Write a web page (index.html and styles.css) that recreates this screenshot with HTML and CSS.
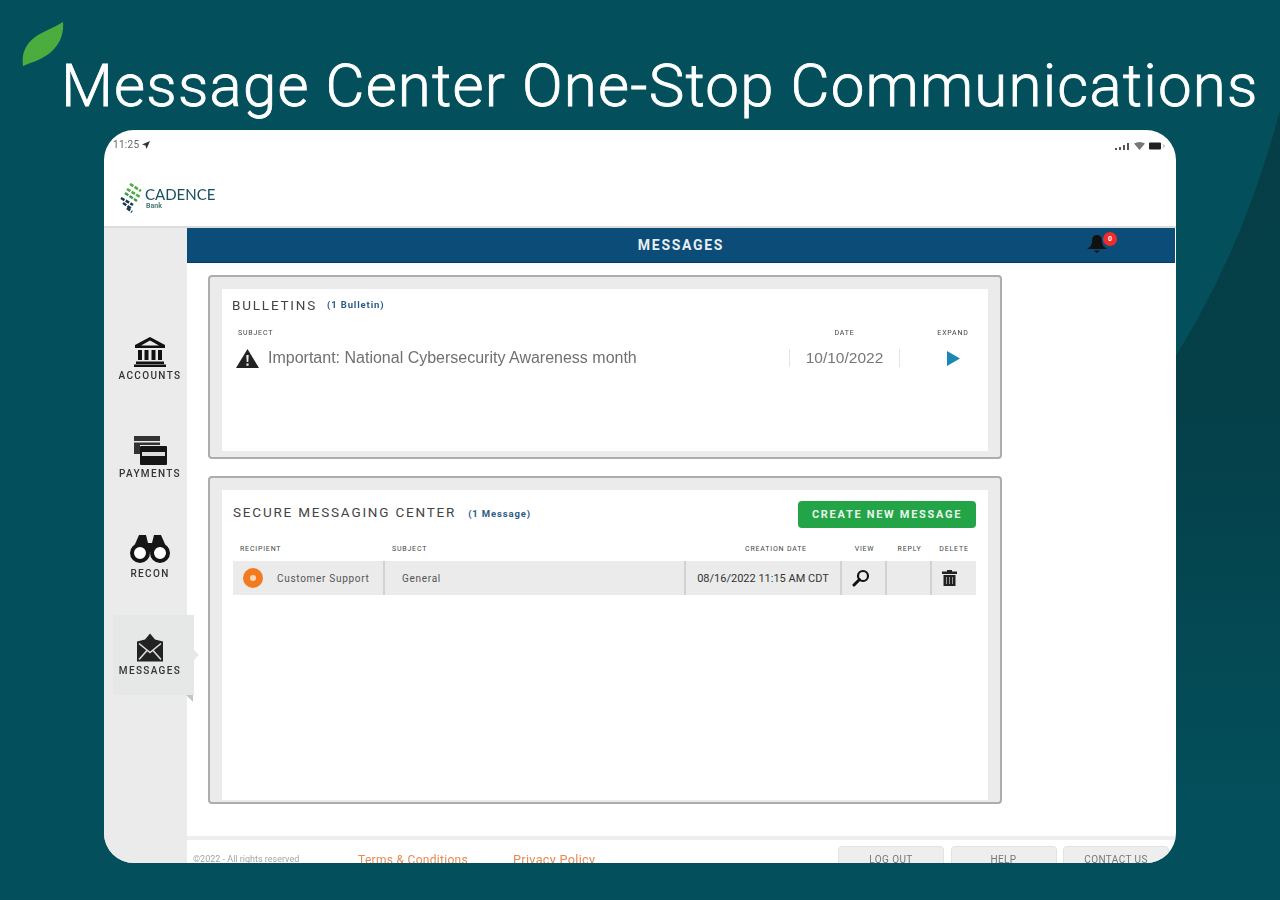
FILE: index.html
```html
<!DOCTYPE html>
<html lang="en">
<head>
<meta charset="utf-8">
<title>Message Center One-Stop Communications</title>
<link rel="stylesheet" href="styles.css">
</head>
<body>
<div class="stage">
  <svg class="swoosh" width="1280" height="900" viewBox="0 0 1280 900" aria-hidden="true">
    <defs>
      <linearGradient id="sw" gradientUnits="userSpaceOnUse" x1="0" y1="110" x2="0" y2="820">
        <stop offset="0" stop-color="#053e47"/>
        <stop offset="0.4" stop-color="#053f48"/>
        <stop offset="1" stop-color="#03505c"/>
      </linearGradient>
    </defs>
    <path d="M1280 110Q1240 262 1160 380L1160 900L1280 900Z" fill="url(#sw)"/>
  </svg>
  <svg class="leaf" width="42" height="46" viewBox="0 0 42 46" aria-hidden="true">
    <path d="M1 44C-1 30 5 20 16 13C25 8 33 5 41 0C42 12 38 22 29 30C21 37 11 40 1 44Z" fill="#4cad3f"/>
  </svg>
  <h1 class="headline">Message Center One-Stop Communications</h1>

  <div class="tablet">
    <div class="top">
      <div class="status">
        <span class="time">11:25 <svg width="8" height="8" viewBox="0 0 8 8"><path d="M8 0L0 3.500L3.500 4.500L4.500 8Z" fill="#333"/></svg></span>
        <span class="signals">
          <svg width="16" height="8" viewBox="0 0 16 8"><path d="M1 6h2v2H1zM5 5h2v3H5zM9 3h2v5H9zM13 1h2v7h-2z" fill="#555"/></svg>
          <svg width="11" height="8" viewBox="0 0 11 8"><path d="M0 1.500Q5.500-1.500 11 1.500L5.500 8Z" fill="#777"/></svg>
          <svg width="17" height="8" viewBox="0 0 17 8"><rect width="12" height="7" y=".5" rx="1" fill="#222"/><path d="M14 2.500L15.500 4L14 5.500" fill="none" stroke="#999"/></svg>
        </span>
      </div>
      <div class="logo">
        <svg width="23" height="31" viewBox="0 0 23 31" aria-hidden="true">
          <g fill="none" stroke-width="2.600" stroke-dasharray="4 1.400">
            <path d="M10 1L21 8" stroke="#4cad3f"/>
            <path d="M7 6L20 14" stroke="#4cad3f"/>
            <path d="M5 10L17 18" stroke="#3f9a56"/>
            <path d="M1 15L13 22" stroke="#1b3a4b"/>
            <path d="M3 20L12 26" stroke="#1b3a4b"/>
            <path d="M7 25L12 29" stroke="#1b3a4b"/>
          </g>
        </svg>
        <div class="wordmark">
          <span class="brand">CADENCE</span>
          <span class="bank">Bank</span>
        </div>
      </div>
    </div>

    <div class="body">
      <nav class="side">
        <a class="nav-item">
          <svg width="34" height="30" viewBox="0 0 34 30"><path d="M17 0L32 8V11H2V8ZM17 3.500L8 8.500H26Z" fill="#111"/><path d="M5 13h4v10H5zM11.500 13h4v10h-4zM18.500 13h4v10h-4zM25 13h4v10h-4zM3 24.500h28V27H3zM1 27.500h32V30H1z" fill="#111"/></svg>
          <span>ACCOUNTS</span>
        </a>
        <a class="nav-item">
          <svg width="34" height="30" viewBox="0 0 34 30"><path d="M1 1h26v5H1zM1 7.500h26V10H7v9H1z" fill="#333"/><rect x="7" y="11" width="27" height="19" rx="1" fill="#151515"/><rect x="9" y="17" width="23" height="4" fill="#ddd"/></svg>
          <span>PAYMENTS</span>
        </a>
        <a class="nav-item">
          <svg width="40" height="30" viewBox="0 0 40 30"><path d="M9 1h7l2 8h4l2-8h7l7 16H2Z" fill="#151515"/><circle cx="10" cy="19" r="8" fill="#fff" stroke="#151515" stroke-width="4"/><circle cx="30" cy="19" r="8" fill="#fff" stroke="#151515" stroke-width="4"/><rect x="17" y="12" width="6" height="6" fill="#151515"/></svg>
          <span class="nav-recon">RECON</span>
        </a>
        <a class="nav-item active">
          <svg width="28" height="29" viewBox="0 0 28 29"><path d="M1 9L9 7L14 1L19 7L27 9V29H1Z" fill="#222"/><path d="M3 11L14 20L25 11M3 27L11 18M25 27L17 18" fill="none" stroke="#ddd" stroke-width="1.600"/></svg>
          <span>MESSAGES</span>
          <i class="fold"></i>
        </a>
      </nav>

      <div class="content">
        <div class="banner">
          <span class="banner-title">MESSAGES</span>
          <span class="bell">
            <svg width="22" height="20" viewBox="0 0 22 20"><path d="M11 1C7 1 6 4 6 8C6 11 4 13 1 15H21C18 13 16 11 16 8C16 4 15 1 11 1Z" fill="#111"/><path d="M8 16.500h6L11 19Z" fill="#111"/></svg>
            <span class="badge">0</span>
          </span>
        </div>

        <div class="main">
          <section class="panel panel-bulletins">
            <div class="sheet">
              <div class="heading">
                <h2>BULLETINS</h2>
                <span class="count">(1 Bulletin)</span>
              </div>
              <div class="bull-grid bull-head">
                <span class="th subject-th">SUBJECT</span>
                <span class="th center">DATE</span>
                <span class="th center expand-th">EXPAND</span>
              </div>
              <div class="bull-grid bull-row">
                <span class="bull-subject">
                  <svg width="23" height="19" viewBox="0 0 23 19"><path d="M11.500 0L23 19H0Z" fill="#222"/><path d="M10.300 6h2.400l-.4 7h-1.600zM10.400 14.500h2.200v2.200h-2.200z" fill="#eee"/></svg>
                  Important: National Cybersecurity Awareness month
                </span>
                <span class="bull-date">10/10/2022</span>
                <span class="bull-expand"><svg width="14" height="15" viewBox="0 0 14 15"><path d="M1 0L14 7.500L1 15Z" fill="#1b87b5"/></svg></span>
              </div>
            </div>
          </section>

          <section class="panel panel-secure">
            <div class="sheet">
              <div class="heading heading-secure">
                <h2>SECURE MESSAGING CENTER</h2>
                <span class="count">(1 Message)</span>
                <button class="create" type="button">CREATE NEW MESSAGE</button>
              </div>
              <div class="msg-grid msg-head">
                <span class="th th-recipient">RECIPIENT</span>
                <span class="th th-subject">SUBJECT</span>
                <span class="th center th-created">CREATION DATE</span>
                <span class="th center">VIEW</span>
                <span class="th center">REPLY</span>
                <span class="th center">DELETE</span>
              </div>
              <div class="msg-grid msg-row">
                <span class="cell cell-recipient"><span class="dot"></span>Customer Support</span>
                <span class="cell cell-subject">General</span>
                <span class="cell cell-date">08/16/2022 11:15 AM CDT</span>
                <span class="cell cell-icon">
                  <svg width="18" height="18" viewBox="0 0 18 18"><circle cx="11" cy="7" r="5" fill="none" stroke="#111" stroke-width="2.200"/><path d="M7.500 10.500L2 16" stroke="#111" stroke-width="3" stroke-linecap="round"/></svg>
                </span>
                <span class="cell cell-icon"></span>
                <span class="cell cell-icon cell-trash">
                  <svg width="15" height="16" viewBox="0 0 15 16"><path d="M5 0h5v1.500h5V4H0V1.500h5zM1.500 5h12v11h-12z" fill="#222"/><path d="M4.500 7v7M7.500 7v7M10.500 7v7" stroke="#999"/></svg>
                </span>
              </div>
            </div>
          </section>
        </div>

        <footer class="foot">
          <span class="copy">©2022 - All rights reserved</span>
          <a class="legal legal-terms">Terms &amp; Conditions</a>
          <a class="legal legal-privacy">Privacy Policy</a>
          <span class="foot-btns">
            <a class="foot-btn">LOG OUT</a>
            <a class="foot-btn">HELP</a>
            <a class="foot-btn">CONTACT US</a>
          </span>
        </footer>
      </div>
    </div>
  </div>
</div>
</body>
</html>
```

FILE: styles.css
```css
* { box-sizing: border-box; }
html, body { margin: 0; padding: 0; }
body { background: #03505c; font-family: "Roboto", "Liberation Sans", sans-serif; }

.stage {
  position: relative;
  width: 1280px;
  height: 900px;
  overflow: hidden;
  background: #03505c;
  padding: 130px 104px 37px;
}
.swoosh { position: absolute; left: 0; top: 0; }
.leaf { position: absolute; left: 22px; top: 22px; }
.headline {
  position: absolute;
  left: 61px;
  top: 46px;
  margin: 0;
  font: 300 60px/80px "Roboto", sans-serif;
  letter-spacing: 1.200px;
  white-space: nowrap;
  color: #fff;
  filter: blur(0.6px);
  -webkit-text-stroke: 0.8px #fff;
}

.tablet {
  position: relative;
  width: 1072px;
  height: 733px;
  background: #fff;
  border-radius: 30px;
  overflow: hidden;
  display: flex;
  flex-direction: column;
  filter: blur(0.6px);
}

.top { height: 98px; flex: none; border-bottom: 2px solid #dcdcdc; display: flex; flex-direction: column; }
.status {
  height: 30px;
  padding: 9px 10px 0 9px;
  display: flex;
  justify-content: space-between;
  font-size: 10px;
  letter-spacing: .3px;
  color: #666;
}
.time { display: flex; align-items: flex-start; gap: 3px; line-height: 12px; }
.time svg { margin-top: 2px; }
.signals { display: flex; gap: 4px; padding-top: 3px; }
.logo { display: flex; align-items: center; gap: 2px; padding: 23px 0 0 16px; }
.wordmark { display: flex; flex-direction: column; }
.brand { font: 400 15px/15px "Lato", sans-serif; color: #17505f; }
.bank { font: 700 7px/8px "Roboto", sans-serif; color: #4a7c78; padding-left: 1px; }

.body { flex: 1; display: flex; min-height: 0; }

.side {
  width: 83px;
  flex: none;
  background: #ebebeb;
  padding: 109px 0 0 9px;
  display: flex;
  flex-direction: column;
}
.nav-item {
  position: relative;
  height: 98.300px;
  display: flex;
  flex-direction: column;
  align-items: center;
  color: #333;
  font-size: 10px;
  font-weight: 500;
  letter-spacing: 1.350px;
  line-height: 12px;
}
.nav-item svg { height: 30px; margin-bottom: 3px; }
.nav-item span { display: block; }
.nav-recon { margin-top: 1px; }
.nav-item.active::before {
  content: "";
  position: absolute;
  left: 0;
  top: -17px;
  width: 81px;
  height: 80px;
  background: #e6e8e8;
}
.nav-item.active::after {
  content: "";
  position: absolute;
  left: 81px;
  top: 18px;
  border: 5px solid transparent;
  border-left-color: #e6e8e8;
}
.nav-item.active svg, .nav-item.active span { position: relative; }
.fold {
  position: absolute;
  left: 73px;
  top: 63px;
  border-top: 7px solid #c4c6c6;
  border-left: 7px solid transparent;
}

.content { flex: 1; display: flex; flex-direction: column; min-width: 0; margin-right: 1px; }

.banner {
  position: relative;
  height: 35px;
  flex: none;
  background: #0b4d78;
  border-bottom: 1px solid #083c66;
  display: flex;
  align-items: center;
  justify-content: center;
}
.banner-title { color: #e9eef2; font-size: 14px; font-weight: 700; letter-spacing: 1.700px; }
.bell { position: absolute; left: 899px; top: 4px; width: 34px; height: 24px; }
.bell svg { position: absolute; left: 0; top: 2px; }
.badge {
  position: absolute;
  left: 17px;
  top: 0;
  width: 14px;
  height: 14px;
  border-radius: 50%;
  background: #ee2c2c;
  color: #fff;
  font-size: 7px;
  font-weight: 700;
  line-height: 14px;
  text-align: center;
}

.main { flex: 1; padding: 12px 0 0 21px; display: flex; flex-direction: column; gap: 17px; }
.panel {
  width: 794px;
  background: #ebebeb;
  border: 2px solid #adadad;
  border-radius: 4px;
  padding: 12px 12px 6px;
}
.panel-bulletins { height: 184px; }
.panel-secure { height: 328px; padding-bottom: 2px; }
.sheet { height: 100%; background: #fff; padding: 0 12px 0 10px; }

.heading { display: flex; align-items: center; gap: 10px; height: 31px; }
.heading h2 { margin: 0; font-size: 13.500px; font-weight: 400; letter-spacing: 1.800px; color: #444; white-space: nowrap; }
.count { font-size: 9.500px; font-weight: 700; color: #2c5b85; white-space: nowrap; letter-spacing: .85px; }
.heading-secure { height: 46px; padding: 0 0 2px 1px; gap: 12px; }
.heading-secure .count { padding-top: 2px; }

.create {
  margin: 4px 0 0 auto;
  width: 178px;
  height: 27px;
  border: 0;
  border-radius: 4px;
  background: #22a447;
  color: #e9f6ec;
  font: 700 11px/27px "Roboto", sans-serif;
  letter-spacing: 1.700px;
  padding: 0;
}

.th { font-size: 7px; line-height: 10px; font-weight: 400; letter-spacing: .8px; color: #444; white-space: nowrap; }
.center { text-align: center; }

.bull-grid { display: grid; grid-template-columns: 557px 111px 1fr; margin-right: -12px; }
.bull-head { height: 15px; align-items: center; margin-top: 5px; }
.subject-th { padding-left: 6px; }
.expand-th { padding-left: 18px; }
.bull-row { height: 30px; align-items: center; margin-top: 3px; }
.bull-subject { display: flex; align-items: center; gap: 9px; padding-left: 4px; font: 400 16px/20px "Liberation Sans", sans-serif; color: #707070; white-space: nowrap; }
.bull-date {
  font: 400 15.500px/18px "Liberation Sans", sans-serif;
  color: #777;
  text-align: center;
  border-left: 1px solid #e4e4e4;
  border-right: 1px solid #e4e4e4;
}
.bull-expand { display: flex; justify-content: center; padding: 1px 0 0 18px; }

.msg-grid {
  display: grid;
  grid-template-columns: 152px 301px 156px 45px 45px 1fr;
  margin-left: 1px;
}
.msg-head { height: 25px; align-items: center; }
.th-recipient { padding-left: 7px; }
.th-subject { padding-left: 7px; }
.th-created { padding-left: 24px; }
.msg-row { height: 34px; background: #ebebeb; align-items: stretch; }
.cell { display: flex; align-items: center; font-size: 10px; color: #555; white-space: nowrap; border-right: 2px solid #d2d2d2; }
.cell:last-child { border-right: 0; }
.cell-recipient { padding-left: 10px; gap: 14px; letter-spacing: .7px; }
.cell-subject { padding-left: 17px; letter-spacing: .7px; }
.cell-date { justify-content: center; font-size: 11px; color: #333; }
.cell-icon { justify-content: center; }
.cell-icon svg { margin-right: 6px; }
.cell-trash svg { margin-right: 9px; }
.dot { width: 20px; height: 20px; border-radius: 50%; background: #f47a1f; position: relative; display: block; }
.dot::after {
  content: "";
  position: absolute;
  left: 7px;
  top: 7px;
  width: 6px;
  height: 6px;
  border-radius: 50%;
  background: #f9d8bf;
}

.foot {
  height: 27px;
  flex: none;
  border-top: 4px solid #eeeeee;
  display: flex;
  position: relative;
  padding-top: 12px;
  font-size: 10px;
  white-space: nowrap;
  overflow: hidden;
}
.copy { margin-left: 6px; width: 165px; font-size: 9px; color: #a5a5a5; line-height: 14px; }
.legal { font: 400 12px/16px "Roboto", sans-serif; color: #e68a55; letter-spacing: .3px; }
.legal-terms { width: 155px; }
.legal-privacy { font-size: 12.700px; }
.foot-btns { margin-left: auto; display: flex; gap: 6.500px; margin-right: 6px; margin-top: -6px; }
.foot-btn {
  width: 106px;
  height: 40px;
  background: #eeeeee;
  border: 1px solid #e2e2e2;
  border-radius: 4px;
  text-align: center;
  padding-top: 7px;
  color: #777;
  line-height: 12px;
  letter-spacing: .4px;
}
```
